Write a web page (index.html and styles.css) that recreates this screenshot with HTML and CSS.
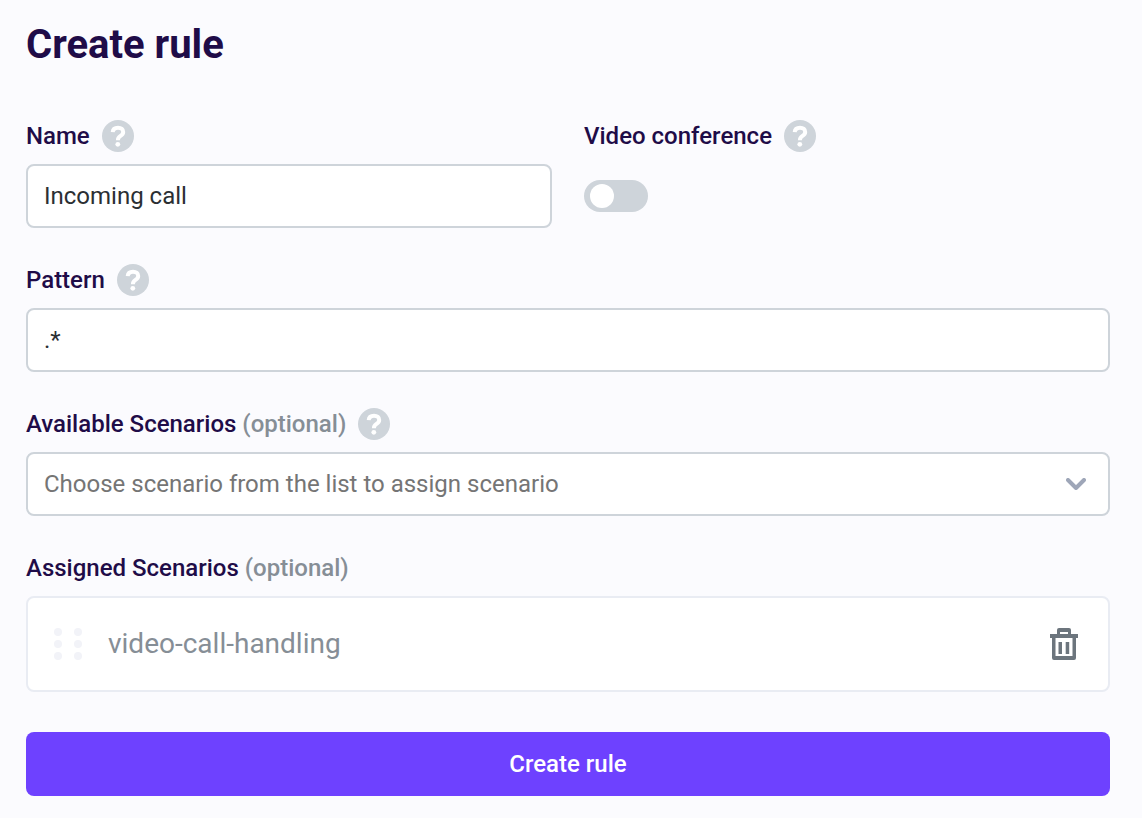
FILE: index.html
```html
<!DOCTYPE html>
<html lang="en">
<head>
<meta charset="utf-8">
<meta name="viewport" content="width=device-width, initial-scale=1">
<title>Create rule</title>
<link rel="stylesheet" href="styles.css">
</head>
<body>
<svg class="sprite" aria-hidden="true">
  <symbol id="help" viewBox="0 0 32 32">
    <circle cx="16" cy="16" r="16" fill="#ced4da"/>
    <path d="M10.7 12.2C10.9 9.3 13 7.7 16 7.7C19.2 7.700 21.2 9.400 21.2 11.900C21.2 14 20 15 18.200 16.200C16.500 17.400 15.900 18.200 15.900 20.200" fill="none" stroke="#fff" stroke-width="4"/>
    <circle cx="15.800" cy="24.300" r="2.400" fill="#fff"/>
  </symbol>
</svg>
<main class="page">
  <h1 class="title">Create rule</h1>
  <form class="form">
    <div class="columns">
      <div class="field">
        <div class="label-row">
          <label class="label" for="name">Name</label>
          <button class="help" type="button" aria-label="Help: name"><svg class="help-icon"><use href="#help"/></svg></button>
        </div>
        <input class="control" id="name" type="text" value="Incoming call">
      </div>
      <div class="field">
        <div class="label-row">
          <label class="label" for="video">Video conference</label>
          <button class="help" type="button" aria-label="Help: video conference"><svg class="help-icon"><use href="#help"/></svg></button>
        </div>
        <div class="switch-row"><input class="switch" id="video" type="checkbox" role="switch"></div>
      </div>
    </div>
    <div class="field">
      <div class="label-row">
        <label class="label" for="pattern">Pattern</label>
        <button class="help" type="button" aria-label="Help: pattern"><svg class="help-icon"><use href="#help"/></svg></button>
      </div>
      <input class="control" id="pattern" type="text" value=".*">
    </div>
    <div class="field">
      <div class="label-row">
        <label class="label" for="scenarios">Available Scenarios <span class="optional">(optional)</span></label>
        <button class="help" type="button" aria-label="Help: available scenarios"><svg class="help-icon"><use href="#help"/></svg></button>
      </div>
      <div class="select-wrap">
        <select class="control select" id="scenarios">
          <option>Choose scenario from the list to assign scenario</option>
        </select>
        <svg class="chevron" viewBox="0 0 20 12" aria-hidden="true"><path d="M2 2l8 8 8-8" fill="none" stroke="#9ea6b8" stroke-width="4" stroke-linecap="round" stroke-linejoin="round"/></svg>
      </div>
    </div>
    <div class="field">
      <div class="label-row">
        <span class="label" id="assigned">Assigned Scenarios <span class="optional">(optional)</span></span>
      </div>
      <ul class="assigned-list" aria-labelledby="assigned">
        <li class="assigned-item">
          <svg class="grip" viewBox="0 0 28 32" fill="#f2f3f8" aria-hidden="true">
            <circle cx="4" cy="4" r="4"/><circle cx="24" cy="4" r="4"/>
            <circle cx="4" cy="16" r="4"/><circle cx="24" cy="16" r="4"/>
            <circle cx="4" cy="28" r="4"/><circle cx="24" cy="28" r="4"/>
          </svg>
          <span class="assigned-name">video-call-handling</span>
          <button class="remove" type="button" aria-label="Remove video-call-handling">
            <svg class="trash" viewBox="0 0 28 32" fill="#6c757d" aria-hidden="true">
              <path fill-rule="evenodd" d="M9 0H19Q21 0 21 2V6H28V10H26V30Q26 32 24 32H4Q2 32 2 30V10H0V6H7V2Q7 0 9 0ZM10 4V6H18V4ZM5.500 10V28H22.500V10Z"/>
              <path d="M8.500 14h3.500v12H8.500zM15.700 14h3.500v12h-3.500z"/>
            </svg>
          </button>
        </li>
      </ul>
    </div>
    <button class="submit" type="submit">Create rule</button>
  </form>
</main>
</body>
</html>
```
FILE: styles.css
```css
*,
*::before {
  box-sizing: border-box;
}

body {
  margin: 0;
  background: #fbfbfe;
  color: #1f0c48;
  font: 24px/32px Roboto, sans-serif;
}

button,
input,
select {
  font: inherit;
}

button {
  padding: 0;
  border: 0;
  background: none;
  cursor: pointer;
}

svg {
  display: block;
}

.sprite {
  display: none;
}

.page {
  padding: 20px 32px 22px 26px;
}

.title {
  margin: 0 0 50px;
  font-size: 40px;
  line-height: 50px;
  font-weight: 700;
}

.form {
  display: flex;
  flex-direction: column;
  gap: 36px;
}

.columns {
  display: grid;
  grid-template-columns: 1fr 1fr;
  gap: 32px;
}

.field {
  display: flex;
  flex-direction: column;
  gap: 12px;
  min-width: 0;
}

.label-row {
  display: flex;
  align-items: center;
  gap: 12px;
}

.label {
  font-weight: 500;
}

.optional {
  color: #868e96;
}

.help-icon {
  width: 32px;
  height: 32px;
}

.control {
  width: 100%;
  height: 64px;
  margin: 0;
  padding: 0 16px;
  border: 2px solid #ced4da;
  border-radius: 8px;
  background: #fff;
  color: #2b2f33;
}

.select-wrap {
  position: relative;
}

.select {
  appearance: none;
  padding-right: 64px;
  color: #757575;
}

.chevron {
  position: absolute;
  top: 26px;
  right: 24px;
  width: 20px;
  height: 12px;
  pointer-events: none;
}

.switch-row {
  display: flex;
  align-items: center;
  height: 64px;
}

.switch {
  appearance: none;
  display: flex;
  align-items: center;
  width: 64px;
  height: 32px;
  margin: 0;
  padding: 0 6px;
  border-radius: 16px;
  background: #ced4da;
  cursor: pointer;
}

.switch::before {
  content: "";
  width: 24px;
  height: 24px;
  border-radius: 50%;
  background: #fff;
}

.switch:checked {
  justify-content: flex-end;
  background: #6e41ff;
}

.assigned-list {
  margin: 0;
  padding: 0;
  list-style: none;
}

.assigned-item {
  display: flex;
  align-items: center;
  height: 96px;
  padding: 0 30px 0 26px;
  border: 2px solid #e9ecf3;
  border-radius: 8px;
  background: #fff;
}

.grip {
  width: 28px;
  height: 32px;
  margin-right: 26px;
}

.assigned-name {
  flex: 1;
  color: #868e96;
  font-size: 28px;
}

.trash {
  width: 28px;
  height: 32px;
}

.submit {
  height: 64px;
  margin-top: 4px;
  border-radius: 8px;
  background: #6e41ff;
  color: #fff;
  font-weight: 500;
}
```
